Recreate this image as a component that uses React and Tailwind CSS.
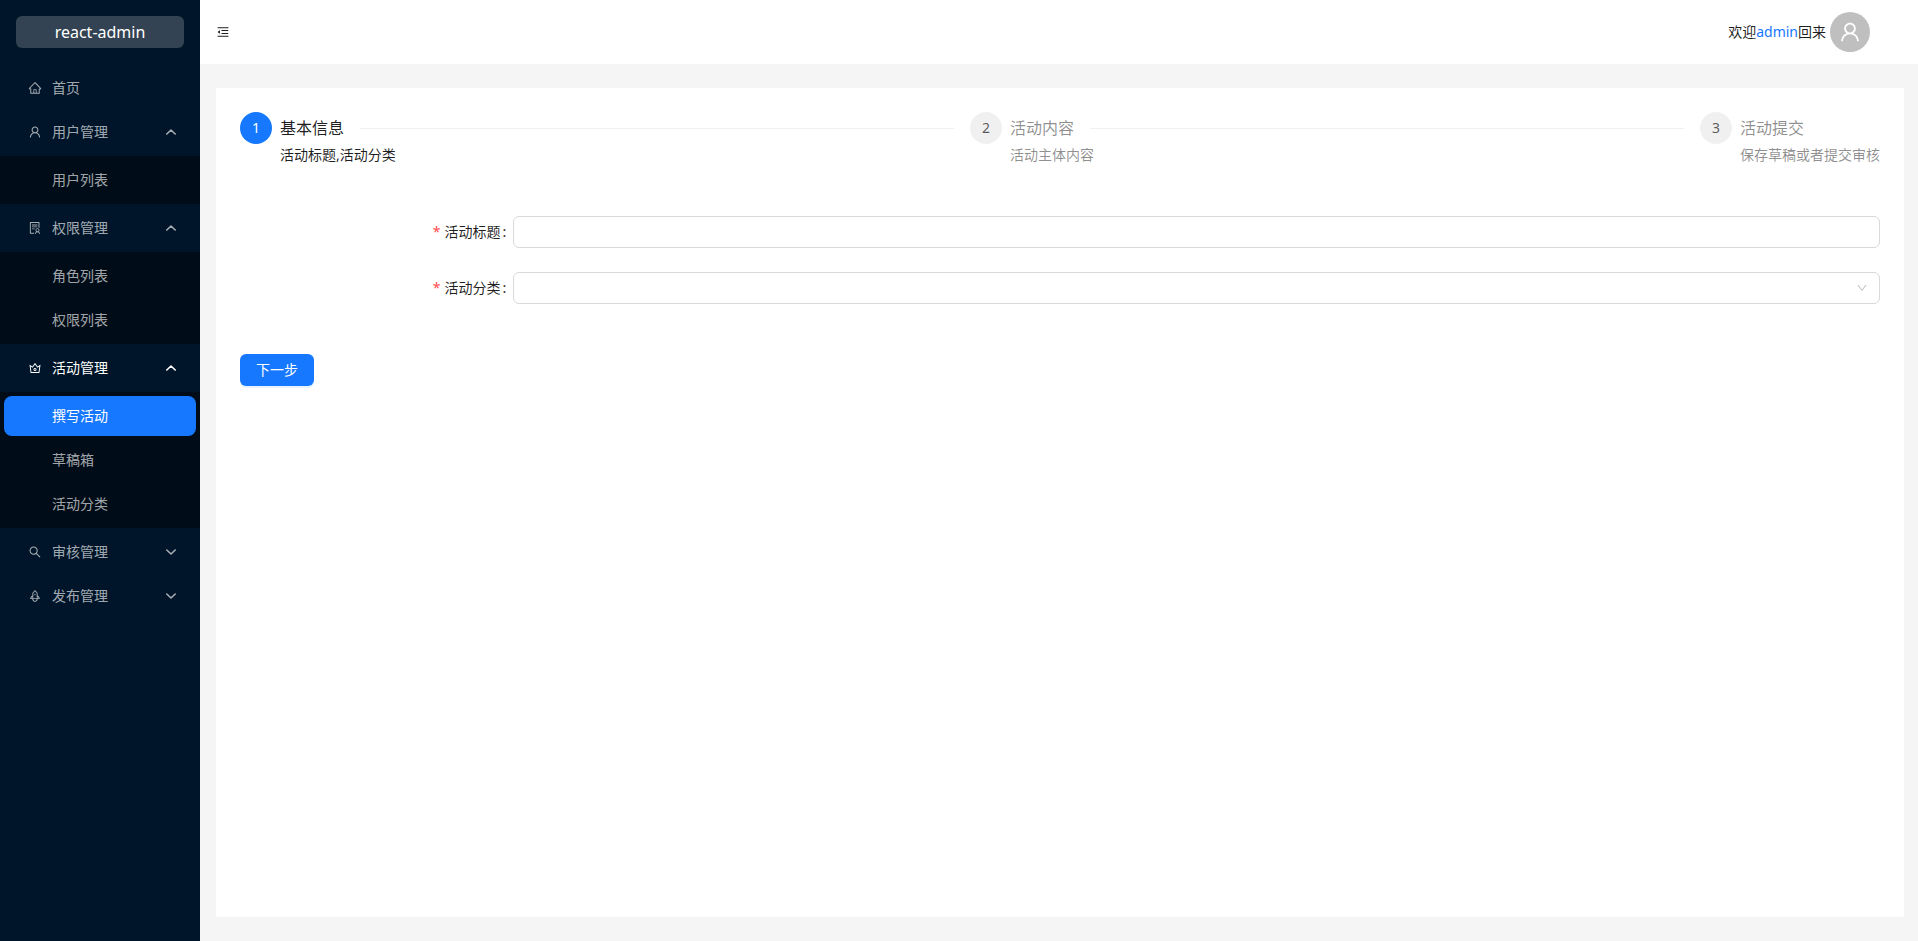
import React from "react";
import {
  AiOutlineHome,
  AiOutlineUser,
  AiOutlineSolution,
  AiOutlineCrown,
  AiOutlineSearch,
  AiOutlineRocket,
  AiOutlineMenuFold,
  AiOutlineDown,
} from "react-icons/ai";

const Chevron = ({ up }) => (
  <svg width="10" height="10" viewBox="0 0 10 10" className="ml-auto mr-[4px] shrink-0">
    <path
      d={up ? "M0.8 7 L5 3 L9.2 7" : "M0.8 3 L5 7 L9.2 3"}
      fill="none"
      stroke="currentColor"
      strokeWidth="1.6"
      strokeLinecap="round"
      strokeLinejoin="round"
    />
  </svg>
);

const TopItem = ({ icon: Icon, label, arrow, active }) => (
  <div
    className={
      "mx-1 flex h-10 items-center pl-6 pr-4 text-sm " +
      (active ? "text-white" : "text-[#ffffffa6]")
    }
  >
    <Icon className="mr-[10px] h-[14px] w-[14px] shrink-0" />
    <span>{label}</span>
    {arrow === "up" && <Chevron up />}
    {arrow === "down" && <Chevron />}
  </div>
);

const SubItem = ({ label, active }) => (
  <div
    className={
      "mx-1 flex h-10 items-center rounded-lg pl-12 text-sm " +
      (active ? "bg-[#1677ff] text-white" : "text-[#ffffffa6]")
    }
  >
    {label}
  </div>
);

const Sub = ({ children }) => <div className="flex flex-col gap-1 bg-[#000c17] py-1">{children}</div>;

const Step = ({ n, title, desc, active, last }) => (
  <div className={"flex " + (last ? "w-[180px] flex-none" : "min-w-0 flex-1")}>
    <div
      className={
        "mr-2 flex h-8 w-8 shrink-0 items-center justify-center rounded-full text-sm " +
        (active ? "bg-[#1677ff] text-white" : "bg-[#0000000f] text-[#000000a6]")
      }
    >
      {n}
    </div>
    <div className="min-w-0 flex-1">
      <div className="flex h-8 items-center">
        <span className={"whitespace-nowrap text-base " + (active ? "text-[#000000e0]" : "text-[#00000073]")}>
          {title}
        </span>
        {!last && <div className="ml-4 h-px flex-1 bg-[#0505050f]" />}
      </div>
      <div className={"whitespace-nowrap text-sm leading-[22px] " + (active ? "text-[#000000e0]" : "text-[#00000073]")}>
        {desc}
      </div>
    </div>
  </div>
);

const Field = ({ label, children }) => (
  <div className="flex h-8 items-center">
    <div className="w-[16.6667%] shrink-0 pr-[7px] text-right text-sm text-[#000000e0]">
      <span className="mr-1 text-[#ff4d4f]">*</span>
      {label}
      <span className="ml-[2px]">:</span>
    </div>
    {children}
  </div>
);

export default function App() {
  return (
    <div
      className="flex h-screen w-full overflow-hidden bg-[#f5f5f5]"
      style={{ fontFamily: "'Noto Sans', 'Noto Sans CJK SC', sans-serif" }}
    >
      <aside className="flex w-[200px] shrink-0 flex-col bg-[#001529]">
        <div className="mx-4 mt-4 flex h-8 items-center justify-center rounded-md bg-[#ffffff33] text-base text-white">
          react-admin
        </div>
        <nav className="mt-5 flex flex-col gap-1">
          <TopItem icon={AiOutlineHome} label="首页" />
          <TopItem icon={AiOutlineUser} label="用户管理" arrow="up" />
          <Sub>
            <SubItem label="用户列表" />
          </Sub>
          <TopItem icon={AiOutlineSolution} label="权限管理" arrow="up" />
          <Sub>
            <SubItem label="角色列表" />
            <SubItem label="权限列表" />
          </Sub>
          <TopItem icon={AiOutlineCrown} label="活动管理" arrow="up" active />
          <Sub>
            <SubItem label="撰写活动" active />
            <SubItem label="草稿箱" />
            <SubItem label="活动分类" />
          </Sub>
          <TopItem icon={AiOutlineSearch} label="审核管理" arrow="down" />
          <TopItem icon={AiOutlineRocket} label="发布管理" arrow="down" />
        </nav>
      </aside>
      <div className="flex min-w-0 flex-1 flex-col">
        <header className="flex h-16 shrink-0 items-center justify-between bg-white pl-4 pr-12">
          <AiOutlineMenuFold className="h-[14px] w-[14px] text-[#000000e0]" />
          <div className="flex items-center gap-1 text-sm text-[#000000e0]">
            <span>
              欢迎<span className="text-[#1677ff]">admin</span>回来
            </span>
            <div className="flex h-10 w-10 items-center justify-center rounded-full bg-[#00000040] text-white">
              <AiOutlineUser className="h-6 w-6" />
            </div>
          </div>
        </header>
        <main className="mb-6 ml-4 mr-[14px] mt-6 flex-1 bg-white p-6">
          <div className="flex gap-4">
            <Step n="1" title="基本信息" desc="活动标题,活动分类" active />
            <Step n="2" title="活动内容" desc="活动主体内容" />
            <Step n="3" title="活动提交" desc="保存草稿或者提交审核" last />
          </div>
          <div className="mt-[50px] flex flex-col gap-6">
            <Field label="活动标题">
              <div className="h-8 flex-1 rounded-md border border-[#d9d9d9] bg-white" />
            </Field>
            <Field label="活动分类">
              <div className="flex h-8 flex-1 items-center justify-end rounded-md border border-[#d9d9d9] bg-white pr-[11px]">
                <AiOutlineDown className="h-3 w-3 text-[#00000040]" />
              </div>
            </Field>
          </div>
          <button className="mt-[50px] h-8 w-[74px] rounded-md bg-[#1677ff] text-sm text-white shadow-[0_2px_0_rgba(5,145,255,0.1)]">
            下一步
          </button>
        </main>
      </div>
    </div>
  );
}
